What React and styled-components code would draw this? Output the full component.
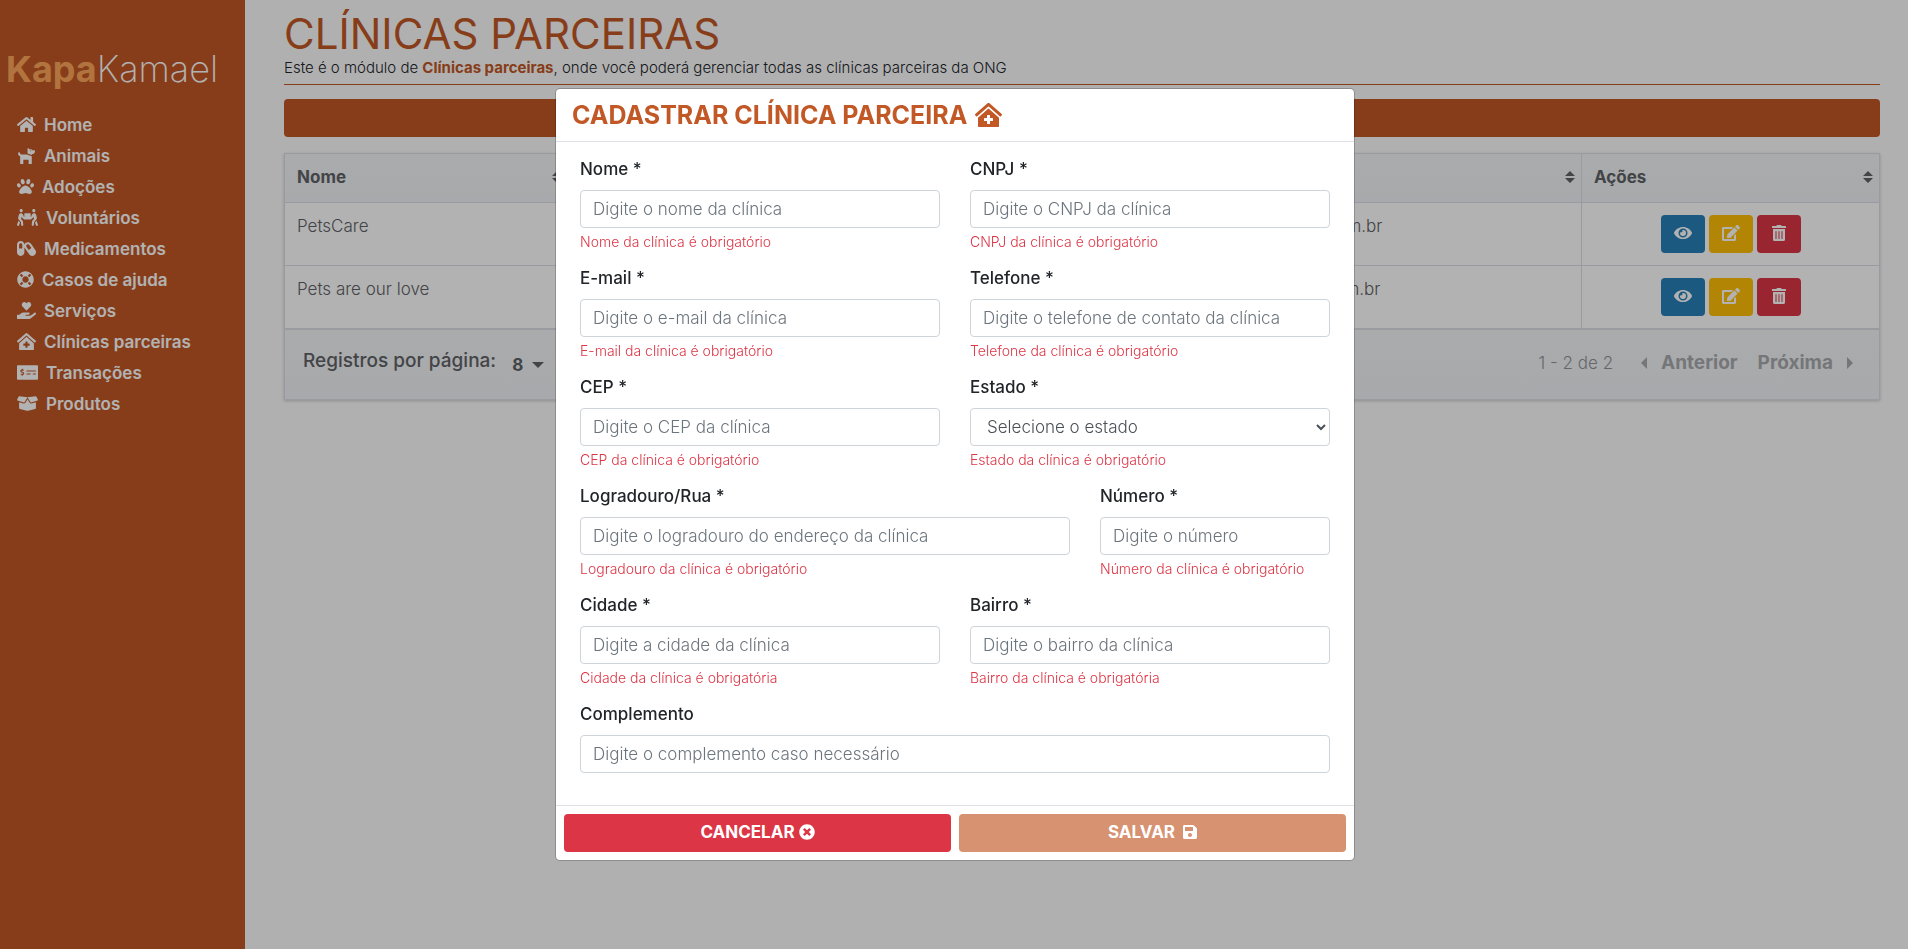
import React from "react";
import styled, { createGlobalStyle } from "styled-components";
import {
  FaHome,
  FaDog,
  FaPaw,
  FaPeopleCarry,
  FaCapsules,
  FaLifeRing,
  FaHandHoldingHeart,
  FaClinicMedical,
  FaMoneyCheckAlt,
  FaBoxOpen,
  FaEye,
  FaEdit,
  FaTrashAlt,
  FaTimesCircle,
  FaSave,
} from "react-icons/fa";

const color = {
  brand: "#c25826",
  brandLight: "#ffa65a",
  danger: "#dc3545",
  info: "#2980b9",
  warning: "#ffc107",
  text: "#212529",
  tableText: "#606266",
  tableMuted: "#909399",
  tableBorder: "#dcdfe6",
  inputBorder: "#ced4da",
};

const GlobalStyle = createGlobalStyle`
  *, *::before, *::after { box-sizing: border-box; }
  body {
    margin: 0;
    background: #fcfcfc;
    color: ${color.text};
    font-family: Inter, "Liberation Sans", sans-serif;
    font-size: 17px;
    font-weight: 300;
    line-height: 22px;
  }
  button, input, select { font: inherit; }
`;

const Page = styled.div`
  display: flex;
  min-height: 100vh;
`;

const Sidebar = styled.aside`
  flex: 0 0 245px;
  padding: 45px 6px 0;
  background: ${color.brand};
  color: #fff;
`;

const Logo = styled.div`
  font-size: 36px;
  line-height: 48px;
  font-weight: 200;

  strong {
    font-weight: 700;
    color: ${color.brandLight};
  }
`;

const Menu = styled.nav`
  display: flex;
  flex-direction: column;
  padding: 16px 11px 0;
`;

const MenuLink = styled.a`
  display: flex;
  align-items: center;
  gap: 8px;
  height: 31px;
  color: #fff;
  font-weight: 600;
  text-decoration: none;

  svg {
    width: ${(p) => p.$iconWidth};
    height: 17px;
  }
`;

const Main = styled.main`
  flex: 1;
  min-width: 0;
  padding: 12px 28px 0 39px;
`;

const PageHeader = styled.header`
  padding-bottom: 4px;
  border-bottom: 1px solid ${color.brand};
`;

const PageTitle = styled.h1`
  margin: 0;
  color: ${color.brand};
  font-size: 42px;
  font-weight: 400;
  line-height: 44px;
`;

const PageText = styled.p`
  margin: 0;
  font-size: 15px;
  line-height: 24px;

  strong {
    color: ${color.brand};
    font-weight: 700;
  }
`;

const NewButton = styled.button`
  display: block;
  width: 100%;
  height: 38px;
  margin: 14px 0 16px;
  border: 0;
  border-radius: 4px;
  background: ${color.brand};
  color: #fff;
  font-weight: 700;
`;

const TableCard = styled.section`
  box-shadow: 0 1px 3px rgba(0, 0, 0, 0.2);
  color: ${color.tableText};
`;

const Table = styled.table`
  width: 100%;
  table-layout: fixed;
  border-collapse: collapse;
  border: 1px solid ${color.tableBorder};
  background: #fff;
`;

const Column = styled.col`
  width: ${(p) => p.$width};
`;

const HeadCell = styled.th`
  height: 49px;
  padding: 0 6px 2px 12px;
  border: 1px solid ${color.tableBorder};
  background: linear-gradient(#f4f5f8, #f1f3f6);
  font-weight: 700;
  text-align: left;
`;

const HeadContent = styled.div`
  display: flex;
  align-items: center;
  justify-content: space-between;
`;

const Cell = styled.td`
  height: 63px;
  padding: 12px;
  border: 1px solid ${color.tableBorder};
  vertical-align: top;
`;

const Actions = styled.div`
  display: flex;
  justify-content: center;
  gap: 4px;
`;

const ActionButton = styled.button`
  display: flex;
  align-items: center;
  justify-content: center;
  width: 44px;
  height: 38px;
  padding: 0 0 2px;
  border: 0;
  border-radius: 4px;
  background: ${(p) => p.$color};
  color: #fff;

  svg {
    width: ${(p) => p.$iconWidth};
    height: 16px;
  }
`;

const TableFooter = styled.footer`
  display: flex;
  align-items: center;
  justify-content: space-between;
  height: 71px;
  padding: 0 26px 4px 18px;
  border: 1px solid ${color.tableBorder};
  background: linear-gradient(#f4f5f8, #f1f3f6);
`;

const PerPage = styled.label`
  display: flex;
  align-items: center;
  gap: 16px;
  padding-bottom: 4px;
  font-size: 19px;
  font-weight: 500;
`;

const PerPageField = styled.span`
  display: flex;
  align-items: center;
  gap: 8px;
  padding-top: 8px;
`;

const PerPageSelect = styled.select`
  appearance: none;
  padding: 0;
  border: 0;
  background: transparent;
  color: inherit;
  font-size: 17px;
  font-weight: 700;
`;

const Pager = styled.div`
  display: flex;
  align-items: center;
  color: ${color.tableMuted};
`;

const PageCount = styled.span`
  margin-right: 28px;
`;

const PagerButton = styled.button`
  display: flex;
  align-items: center;
  gap: 14px;
  padding: 0;
  margin-left: ${(p) => (p.$next ? "20px" : "0")};
  border: 0;
  background: transparent;
  color: ${color.tableText};
  font-size: 19px;
  font-weight: 700;
  opacity: 0.5;
`;

const Overlay = styled.div`
  position: fixed;
  inset: 0;
  display: flex;
  align-items: center;
  justify-content: center;
  padding-left: 2px;
  background: rgba(0, 0, 0, 0.3);
`;

const Dialog = styled.form`
  width: 100%;
  max-width: 800px;
  border: 1px solid rgba(0, 0, 0, 0.2);
  border-radius: 5px;
  background: #fff;
  background-clip: padding-box;
`;

const DialogHeader = styled.header`
  padding: 8px 16px;
  border-bottom: 1px solid #dee2e6;
`;

const DialogTitle = styled.h2`
  display: flex;
  align-items: center;
  gap: 8px;
  margin: 0;
  color: ${color.brand};
  font-size: 25px;
  font-weight: 700;
  line-height: 36px;

  svg {
    width: 27px;
    height: 24px;
  }
`;

const Fields = styled.div`
  display: grid;
  grid-template-columns: repeat(12, 1fr);
  gap: 16px 30px;
  padding: 16px 24px 32px;
`;

const Field = styled.div`
  grid-column: span ${(p) => p.$span};
`;

const Label = styled.label`
  display: block;
  margin-bottom: 10px;
  font-weight: 500;
`;

const Input = styled.input`
  display: block;
  width: 100%;
  height: 38px;
  padding: 6px 12px;
  border: 1px solid ${color.inputBorder};
  border-radius: 4px;
  background: #fff;
  color: #495057;

  &::placeholder {
    color: #6c757d;
    opacity: 1;
  }
`;

const ErrorText = styled.small`
  display: block;
  margin-top: 4px;
  color: ${color.danger};
  font-size: 14px;
  line-height: 19px;
`;

const DialogFooter = styled.footer`
  display: flex;
  gap: 8px;
  padding: 8px;
  border-top: 1px solid #dee2e6;
`;

const FooterButton = styled.button`
  display: flex;
  flex: 1;
  align-items: center;
  justify-content: center;
  gap: ${(p) => p.$gap};
  height: 38px;
  padding: 0 0 2px;
  border: 0;
  border-radius: 4px;
  background: ${(p) => p.$color};
  color: #fff;
  font-weight: 700;
  opacity: ${(p) => (p.disabled ? 0.65 : 1)};

  svg {
    width: ${(p) => p.$iconWidth};
    height: 16px;
  }
`;

const menu = [
  { label: "Home", icon: FaHome, iconWidth: "19px" },
  { label: "Animais", icon: FaDog, iconWidth: "19px" },
  { label: "Adoções", icon: FaPaw, iconWidth: "17px" },
  { label: "Voluntários", icon: FaPeopleCarry, iconWidth: "21px" },
  { label: "Medicamentos", icon: FaCapsules, iconWidth: "19px" },
  { label: "Casos de ajuda", icon: FaLifeRing, iconWidth: "17px" },
  { label: "Serviços", icon: FaHandHoldingHeart, iconWidth: "19px" },
  { label: "Clínicas parceiras", icon: FaClinicMedical, iconWidth: "19px" },
  { label: "Transações", icon: FaMoneyCheckAlt, iconWidth: "21px" },
  { label: "Produtos", icon: FaBoxOpen, iconWidth: "21px" },
];

const columns = [
  { label: "Nome", width: "284px" },
  { label: "CNPJ", width: "auto" },
  { label: "Telefone", width: "auto" },
  { label: "E-mail", width: "416px" },
  { label: "Ações", width: "298px" },
];

const clinics = [
  ["PetsCare", "12.345.678/0001-90", "(11) 4002-8922", "contato@petscare.com.br"],
  ["Pets are our love", "98.765.432/0001-10", "(11) 3003-1234", "contato@petslove.com.br"],
];

const fields = [
  { id: "nome", label: "Nome *", hint: "Digite o nome da clínica", error: "Nome da clínica é obrigatório", span: 6 },
  { id: "cnpj", label: "CNPJ *", hint: "Digite o CNPJ da clínica", error: "CNPJ da clínica é obrigatório", span: 6 },
  { id: "email", label: "E-mail *", hint: "Digite o e-mail da clínica", error: "E-mail da clínica é obrigatório", span: 6 },
  { id: "telefone", label: "Telefone *", hint: "Digite o telefone de contato da clínica", error: "Telefone da clínica é obrigatório", span: 6 },
  { id: "cep", label: "CEP *", hint: "Digite o CEP da clínica", error: "CEP da clínica é obrigatório", span: 6 },
  { id: "estado", label: "Estado *", hint: "Selecione o estado", error: "Estado da clínica é obrigatório", span: 6, select: true },
  { id: "logradouro", label: "Logradouro/Rua *", hint: "Digite o logradouro do endereço da clínica", error: "Logradouro da clínica é obrigatório", span: 8 },
  { id: "numero", label: "Número *", hint: "Digite o número", error: "Número da clínica é obrigatório", span: 4 },
  { id: "cidade", label: "Cidade *", hint: "Digite a cidade da clínica", error: "Cidade da clínica é obrigatória", span: 6 },
  { id: "bairro", label: "Bairro *", hint: "Digite o bairro da clínica", error: "Bairro da clínica é obrigatória", span: 6 },
  { id: "complemento", label: "Complemento", hint: "Digite o complemento caso necessário", span: 12 },
];

const SortIcon = () => (
  <svg width="10" height="12" viewBox="0 0 10 12" fill="currentColor" aria-hidden="true">
    <path d="M5 0 10 5H0zM5 12 0 7h10z" />
  </svg>
);

const CaretDown = () => (
  <svg width="12" height="6" viewBox="0 0 12 6" fill="currentColor" aria-hidden="true">
    <path d="M0 0h12L6 6z" />
  </svg>
);

const CaretSide = ({ right }) => (
  <svg width="6" height="12" viewBox="0 0 6 12" fill="currentColor" aria-hidden="true">
    <path d={right ? "M0 0 6 6 0 12z" : "M6 0 0 6l6 6z"} />
  </svg>
);

function ClinicsTable() {
  return (
    <TableCard>
      <Table>
        <colgroup>
          {columns.map((c) => (
            <Column key={c.label} $width={c.width} />
          ))}
        </colgroup>
        <thead>
          <tr>
            {columns.map((c) => (
              <HeadCell key={c.label} scope="col">
                <HeadContent>
                  {c.label}
                  <SortIcon />
                </HeadContent>
              </HeadCell>
            ))}
          </tr>
        </thead>
        <tbody>
          {clinics.map((row) => (
            <tr key={row[0]}>
              {row.map((value) => (
                <Cell key={value}>{value}</Cell>
              ))}
              <Cell>
                <Actions>
                  <ActionButton type="button" $color={color.info} $iconWidth="18px" aria-label="Visualizar">
                    <FaEye />
                  </ActionButton>
                  <ActionButton type="button" $color={color.warning} $iconWidth="18px" aria-label="Editar">
                    <FaEdit />
                  </ActionButton>
                  <ActionButton type="button" $color={color.danger} $iconWidth="14px" aria-label="Excluir">
                    <FaTrashAlt />
                  </ActionButton>
                </Actions>
              </Cell>
            </tr>
          ))}
        </tbody>
      </Table>
      <TableFooter>
        <PerPage htmlFor="per-page">
          Registros por página:
          <PerPageField>
            <PerPageSelect id="per-page" defaultValue="8">
              <option value="8">8</option>
            </PerPageSelect>
            <CaretDown />
          </PerPageField>
        </PerPage>
        <Pager>
          <PageCount>1 - 2 de 2</PageCount>
          <PagerButton type="button">
            <CaretSide />
            Anterior
          </PagerButton>
          <PagerButton type="button" $next>
            Próxima
            <CaretSide right />
          </PagerButton>
        </Pager>
      </TableFooter>
    </TableCard>
  );
}

function ClinicDialog() {
  return (
    <Overlay>
      <Dialog role="dialog" aria-modal="true" aria-labelledby="dialog-title">
        <DialogHeader>
          <DialogTitle id="dialog-title">
            CADASTRAR CLÍNICA PARCEIRA
            <FaClinicMedical />
          </DialogTitle>
        </DialogHeader>
        <Fields>
          {fields.map((f) => (
            <Field key={f.id} $span={f.span}>
              <Label htmlFor={f.id}>{f.label}</Label>
              {f.select ? (
                <Input as="select" id={f.id} defaultValue="">
                  <option value="">{f.hint}</option>
                </Input>
              ) : (
                <Input id={f.id} type="text" placeholder={f.hint} />
              )}
              {f.error && <ErrorText>{f.error}</ErrorText>}
            </Field>
          ))}
        </Fields>
        <DialogFooter>
          <FooterButton type="button" $color={color.danger} $gap="4px" $iconWidth="16px">
            CANCELAR
            <FaTimesCircle />
          </FooterButton>
          <FooterButton type="submit" $color={color.brand} $gap="8px" $iconWidth="14px" disabled>
            SALVAR
            <FaSave />
          </FooterButton>
        </DialogFooter>
      </Dialog>
    </Overlay>
  );
}

export default function App() {
  return (
    <>
      <GlobalStyle />
      <Page>
        <Sidebar>
          <Logo>
            <strong>Kapa</strong>Kamael
          </Logo>
          <Menu>
            {menu.map(({ label, icon: Icon, iconWidth }) => (
              <MenuLink key={label} href="#" $iconWidth={iconWidth}>
                <Icon />
                {label}
              </MenuLink>
            ))}
          </Menu>
        </Sidebar>
        <Main>
          <PageHeader>
            <PageTitle>CLÍNICAS PARCEIRAS</PageTitle>
            <PageText>
              Este é o módulo de <strong>Clínicas parceiras</strong>, onde você poderá gerenciar todas as
              clínicas parceiras da ONG
            </PageText>
          </PageHeader>
          <NewButton type="button">CADASTRAR CLÍNICA</NewButton>
          <ClinicsTable />
        </Main>
      </Page>
      <ClinicDialog />
    </>
  );
}
